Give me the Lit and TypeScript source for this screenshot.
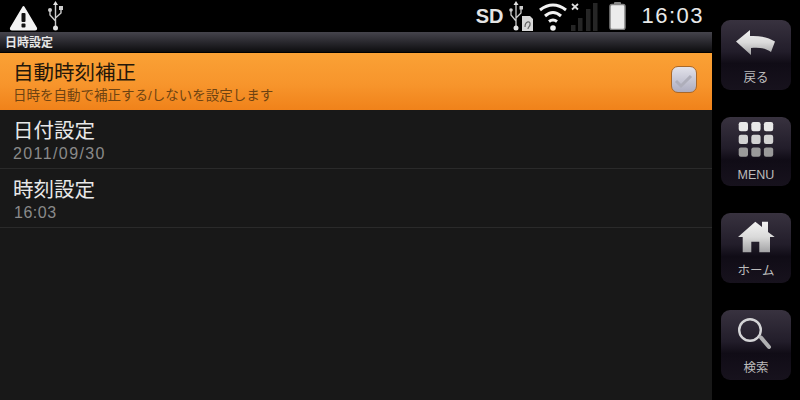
import { LitElement, html, css, svg } from "lit"
import { customElement } from "lit/decorators.js"

const rows = [
  { title: "自動時刻補正", sub: "日時を自動で補正する/しないを設定します", active: true, kind: "" },
  { title: "日付設定", sub: "2011/09/30", active: false, kind: "date" },
  { title: "時刻設定", sub: "16:03", active: false, kind: "time" },
]

const defs = svg`
  <defs>
    <linearGradient id="ig" x1="0" y1="0" x2="0" y2="1">
      <stop offset="0" stop-color="#f2f2f2" />
      <stop offset="0.5" stop-color="#dadada" />
      <stop offset="1" stop-color="#a2a2a4" />
    </linearGradient>
  </defs>`

const buttons = [
  {
    label: "戻る",
    icon: svg`${defs}<path d="M0 16.500 L14 5 V11 C22 10.500 32 12 39 16.500 L35 27 C30 23 22 22 15 23 V30 Z" fill="url(#ig)" />`,
  },
  {
    label: "MENU",
    icon: svg`${[0, 1, 2].map((r) =>
      [0, 1, 2].map(
        (c) =>
          svg`<rect x=${2.7 + c * 12.6} y=${r * 12.7} width="9.300" height="9.300" rx="2.200" fill=${["#e8e8e8", "#d2d2d2", "#9a9a9a"][r]} />`
      )
    )}`,
  },
  {
    label: "ホーム",
    icon: svg`${defs}<path d="M19.300 3.700 L26 9 V3.700 H32 V14 L38.700 19 H34 V34.300 H23.300 V23.700 H15.300 V34.300 H6.700 V19 H2 Z" fill="url(#ig)" />`,
  },
  {
    label: "検索",
    icon: svg`<circle cx="14" cy="15" r="10.800" fill="none" stroke="#d4d4d6" stroke-width="2.400" /><path d="M25 22.500 L33 32" stroke="#b0b0b2" stroke-width="4" stroke-linecap="round" />`,
  },
]

@customElement("app-root")
export class AppRoot extends LitElement {
  static styles = css`
    :host {
      display: grid;
      grid-template-columns: 712px 88px;
      width: 800px;
      height: 400px;
      background: #000;
      font-family: "Liberation Sans", "Noto Sans CJK JP", sans-serif;
      overflow: hidden;
    }
    .main {
      display: flex;
      flex-direction: column;
      height: 400px;
      background: #181818;
    }
    .status {
      display: flex;
      align-items: center;
      height: 32px;
      background: #000;
      color: #eee;
      flex: none;
    }
    .status svg {
      display: block;
      flex: none;
    }
    .warn {
      margin: 3px 0 0 9px;
    }
    .usb {
      margin-left: 10px;
    }
    .spacer {
      flex: 1;
    }
    .sd {
      font-size: 20px;
      font-weight: 700;
      color: #e4e4e4;
      margin-right: 5px;
    }
    .wifi {
      margin-left: 6px;
    }
    .bars {
      margin-left: 1px;
    }
    .battery {
      margin-left: 11px;
    }
    .clock {
      font-size: 22px;
      margin-left: 15px;
      margin-right: 8px;
      color: #e8e8e8;
      letter-spacing: 1.500px;
    }
    .titlebar {
      display: flex;
      align-items: center;
      flex: none;
      height: 21px;
      padding: 0 0 2px 5px;
      box-sizing: border-box;
      border-bottom: 1px solid #000;
      background: linear-gradient(#45444c, #2c2b31 45%, #0d0d0f);
      color: #e6e6e6;
      font-size: 12px;
      font-weight: 700;
    }
    .row {
      display: flex;
      align-items: center;
      flex: none;
      height: 59px;
      box-sizing: border-box;
      padding: 3px 14px 0 13px;
      border-bottom: 1px solid #2a2a2a;
    }
    .row.active {
      height: 57px;
      padding-top: 2px;
      border-bottom: none;
      background: linear-gradient(#faa135, #f7952c 55%, #f0821a);
    }
    .text {
      flex: 1;
    }
    .title {
      font-size: 20.500px;
      line-height: 26px;
      color: #e8e8e8;
    }
    .sub {
      font-size: 13.500px;
      line-height: 20px;
      color: #8a8a8a;
    }
    .sub.date {
      font-size: 16px;
      letter-spacing: 1.400px;
    }
    .sub.time {
      font-size: 16px;
      letter-spacing: 0.500px;
      padding-left: 1px;
    }
    .active .title {
      color: #24170a;
    }
    .active .sub {
      color: #6e4312;
    }
    .check {
      width: 26px;
      height: 27px;
      box-sizing: border-box;
      border-radius: 7px;
      border: 1px solid #a8682a;
      background: linear-gradient(#e2e2ea, #adadc0);
      margin: 0 1px 6px 0;
    }
    .check svg {
      display: block;
    }
    .side {
      display: flex;
      flex-direction: column;
      gap: 27px;
      padding: 20px 9px 0;
    }
    .btn {
      display: flex;
      flex-direction: column;
      align-items: center;
      height: 69.670px;
      box-sizing: border-box;
      border-radius: 9px;
      background: linear-gradient(#38323f, #221d2a 45%, #100c16 62%, #17121d);
      padding-top: 5px;
    }
    .btn svg {
      display: block;
      flex: none;
    }
    .btn span {
      font-size: 12.500px;
      line-height: 14px;
      margin-top: 10px;
      color: #bcbcbc;
    }
  `

  render() {
    return html`
      <div class="main">
        <div class="status">
          <svg class="warn" width="29" height="26" viewBox="0 0 29 26">
            <path d="M14.500 2 L27 23 Q27.500 24.500 26 24.500 L3 24.500 Q1.500 24.500 2 23 Z" fill="#f2f2f2" stroke="#f2f2f2" stroke-width="2" stroke-linejoin="round" />
            <rect x="12.500" y="8" width="4" height="9" rx="1" fill="#111" />
            <rect x="12.500" y="18.500" width="4" height="4" rx="1" fill="#111" />
          </svg>
          <svg class="usb" width="15" height="30" viewBox="0 0 15 30">
            <path d="M7.500 3 V27 M7.500 20 L2 14 V10 M7.500 17 L13 12 V8" fill="none" stroke="#ccc" stroke-width="1.400" />
            <path d="M7.500 0 L10 4 H5 Z" fill="#e4e4e4" />
            <circle cx="2" cy="9" r="2" fill="#ccc" />
            <rect x="11" y="5" width="4" height="4" fill="#ccc" />
            <circle cx="7.500" cy="27" r="2.500" fill="#e4e4e4" />
          </svg>
          <div class="spacer"></div>
          <span class="sd">SD</span>
          <svg width="25" height="30" viewBox="0 0 25 30">
            <path d="M8 3 V27 M8 20 L3 14 V10 M8 17 L13 12 V8" fill="none" stroke="#ccc" stroke-width="1.300" />
            <path d="M8 0 L10.500 4 H5.500 Z" fill="#e4e4e4" />
            <circle cx="3" cy="9" r="1.800" fill="#ccc" />
            <rect x="11.500" y="5" width="3.500" height="3.500" fill="#ccc" />
            <circle cx="8" cy="27" r="2.500" fill="#e4e4e4" />
            <path d="M14 15 L22 15 L25 18 L25 30 L14 30 Z" fill="#d8d8d8" />
            <path d="M17 26 C17 20 23 19 22 24 C21.500 26 20 26 20 28" fill="none" stroke="#666" stroke-width="1.200" />
          </svg>
          <svg class="wifi" width="30" height="30" viewBox="0 0 30 30">
            <path d="M1 9 Q14 -1 27 9" fill="none" stroke="#f2f2f2" stroke-width="3" />
            <path d="M6 15 Q14 8 22 15" fill="none" stroke="#f2f2f2" stroke-width="3" />
            <path d="M10 20.500 Q14 17.500 18 20.500" fill="none" stroke="#f2f2f2" stroke-width="3" />
            <circle cx="14" cy="27" r="2.800" fill="#f2f2f2" />
          </svg>
          <svg class="bars" width="28" height="30" viewBox="0 0 28 30">
            <rect x="1" y="24" width="4.500" height="6" fill="#262626" />
            <rect x="8" y="17" width="4.500" height="13" fill="#262626" />
            <rect x="16" y="8" width="4.500" height="22" fill="#262626" />
            <rect x="23" y="2" width="4.500" height="28" fill="#262626" />
            <path d="M2 3 L8 8.500 M8 3 L2 8.500" stroke="#ddd" stroke-width="1.800" />
          </svg>
          <svg class="battery" width="17" height="28" viewBox="0 0 17 28">
            <rect x="5" y="0" width="7" height="3" rx="1" fill="#888" />
            <rect x="1" y="2.500" width="15" height="25" rx="2" fill="#ececec" stroke="#858585" stroke-width="1.500" />
          </svg>
          <span class="clock">16:03</span>
        </div>
        <div class="titlebar">日時設定</div>
        ${rows.map(
          (r) => html`
            <div class="row ${r.active ? "active" : ""}">
              <div class="text">
                <div class="title">${r.title}</div>
                <div class="sub ${r.kind}">${r.sub}</div>
              </div>
              ${r.active
                ? html`<div class="check">
                    <svg width="24" height="25" viewBox="0 0 24 25">
                      <path d="M4 14 L9 19 L19 9" fill="none" stroke="#aeaeba" stroke-width="3" />
                    </svg>
                  </div>`
                : ""}
            </div>
          `
        )}
      </div>
      <div class="side">
        ${buttons.map(
          (b) => html`
            <div class="btn">
              <svg width="40" height="36" viewBox="0 0 40 36">${b.icon}</svg>
              <span>${b.label}</span>
            </div>
          `
        )}
      </div>
    `
  }
}
